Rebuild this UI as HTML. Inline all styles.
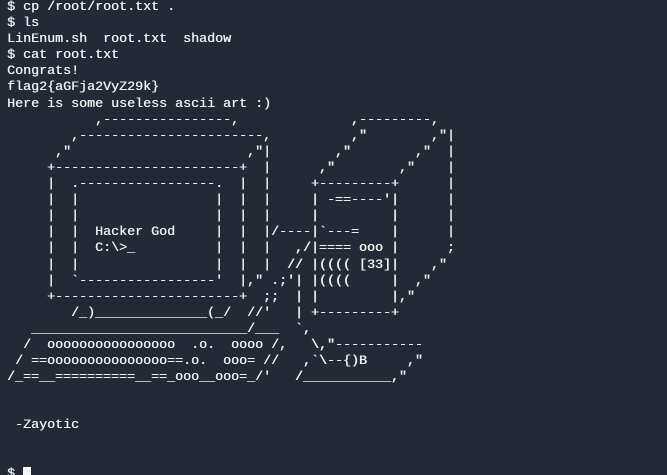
<!DOCTYPE html>
<html><head><meta charset="utf-8"><style>
html,body{margin:0;padding:0;background:#242a35;width:667px;height:475px;overflow:hidden}
pre{margin:0;padding:0 0 0 7px;font-family:"Liberation Mono","DejaVu Sans Mono",monospace;font-size:13.33px;line-height:16.1px;color:#eef0f4;white-space:pre;text-shadow:0.4px 0 0 #eef0f4}
.c{display:inline-block;width:8px;height:12px;background:#f4f6fa;vertical-align:-2px}
</style></head><body><pre>$ cp /root/root.txt .
$ ls
LinEnum.sh  root.txt  shadow
$ cat root.txt
Congrats!
flag2{aGFja2VyZ29k}
Here is some useless ascii art :)
           ,----------------,              ,---------,
        ,-----------------------,          ,"        ,"|
      ,"                      ,"|        ,"        ,"  |
     +-----------------------+  |      ,"        ,"    |
     |  .-----------------.  |  |     +---------+      |
     |  |                 |  |  |     | -==----'|      |
     |  |                 |  |  |     |         |      |
     |  |  Hacker God     |  |  |/----|`---=    |      |
     |  |  C:\&gt;_          |  |  |   ,/|==== ooo |      ;
     |  |                 |  |  |  // |(((( [33]|    ,"
     |  `-----------------'  |," .;'| |((((     |  ,"
     +-----------------------+  ;;  | |         |,"
        /_)______________(_/  //'   | +---------+
   ___________________________/___  `,
  /  oooooooooooooooo  .o.  oooo /,   \,"-----------
 / ==ooooooooooooooo==.o.  ooo= //   ,`\--{)B     ,"
/_==__==========__==_ooo__ooo=_/'   /___________,"


 -Zayotic


$ <span class="c"></span></pre></body></html>
